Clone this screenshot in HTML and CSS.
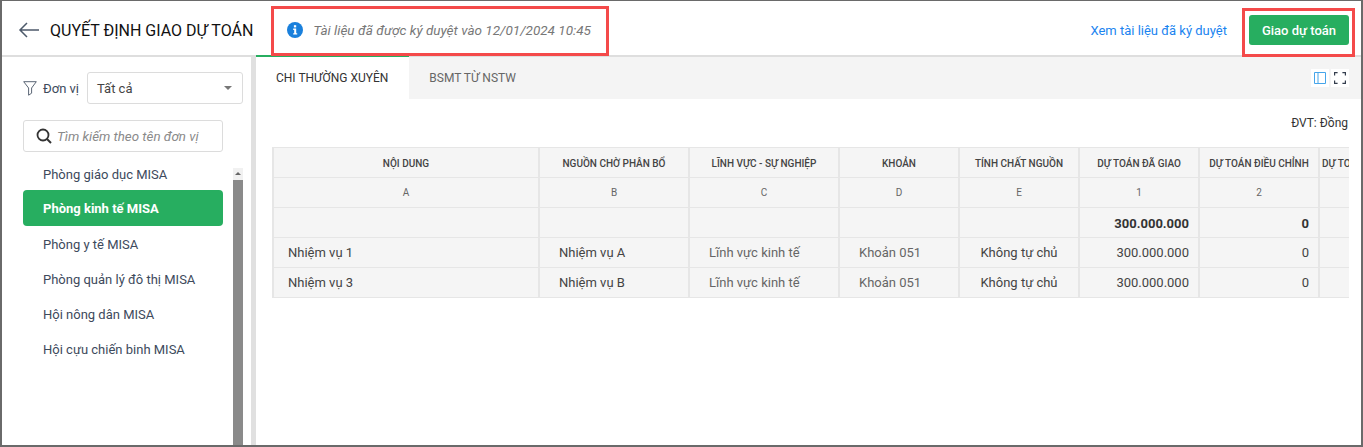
FILE: index.html
```html
<!DOCTYPE html>
<html lang="en">

<head>
    <meta charset="UTF-8">
    <title>Quyết định giao dự toán</title>
    <link rel="stylesheet" href="styles.css">
</head>

<body>
    <div class="app">
        <header class="top-bar">
            <svg class="back-icon" width="22" height="16" viewBox="0 0 22 16">
                <path d="M21 8H2M9 1L2 8l7 7" fill="none" stroke="#4d5a6b" stroke-width="1.5"/>
            </svg>
            <h1 class="page-title">QUYẾT ĐỊNH GIAO DỰ TOÁN</h1>
            <div class="notice">
                <svg width="16" height="16" viewBox="0 0 16 16">
                    <circle cx="8" cy="8" r="8" fill="#1a80dc"/>
                    <rect x="6.9" y="3.2" width="2.3" height="2.2" fill="#fff"/>
                    <path d="M6.2 6.6h3v4.6h1v1.3H6.2v-1.3h1V7.9h-1z" fill="#fff"/>
                </svg>
                <span>Tài liệu đã được ký duyệt vào 12/01/2024 10:45</span>
            </div>
            <a class="view-link" href="#">Xem tài liệu đã ký duyệt</a>
            <button class="assign-button">Giao dự toán</button>
        </header>

        <div class="content">
            <aside class="sidebar">
                <div class="filter-row">
                    <svg width="14" height="15" viewBox="0 0 14 15">
                        <path d="M.7.7h12.6L8.6 7v5.2L5.6 14.2V7z" fill="none" stroke="#5b6675" stroke-width="1"/>
                    </svg>
                    <label>Đơn vị</label>
                    <div class="select-box">
                        <span>Tất cả</span>
                        <i class="caret"></i>
                    </div>
                </div>
                <div class="search-box">
                    <svg width="16" height="16" viewBox="0 0 16 16">
                        <circle cx="7" cy="7" r="5.5" fill="none" stroke="#333" stroke-width="1.8"/>
                        <path d="M11 11l4 4" stroke="#333" stroke-width="2"/>
                    </svg>
                    <span>Tìm kiếm theo tên đơn vị</span>
                </div>
                <div class="unit-area">
                    <ul class="unit-list">
                        <li>Phòng giáo dục MISA</li>
                        <li class="active">Phòng kinh tế MISA</li>
                        <li>Phòng y tế MISA</li>
                        <li>Phòng quản lý đô thị MISA</li>
                        <li>Hội nông dân MISA</li>
                        <li>Hội cựu chiến binh MISA</li>
                    </ul>
                    <div class="scrollbar">
                        <div class="scroll-up"><i></i></div>
                        <div class="scroll-thumb"></div>
                    </div>
                </div>
            </aside>

            <main class="main">
                <div class="tab-bar">
                    <div class="tab active">CHI THƯỜNG XUYÊN</div>
                    <div class="tab">BSMT TỪ NSTW</div>
                    <div class="tab-tools">
                        <span class="tool">
                            <svg width="12" height="12" viewBox="0 0 12 12">
                                <path d="M.5.5h11v11H.5zM4 .5v11" fill="none" stroke="#45a5ea" stroke-width="1"/>
                            </svg>
                        </span>
                        <span class="tool">
                            <svg width="12" height="12" viewBox="0 0 12 12">
                                <path d="M.6 3.500V.6h3M8.400 .6h3v2.900M11.400 8.500v2.900h-3M3.600 11.400h-3V8.500" fill="none" stroke="#333d4d" stroke-width="1.200"/>
                            </svg>
                        </span>
                    </div>
                </div>
                <div class="unit-note">ĐVT: Đồng</div>
                <div class="table-wrap">
                    <table class="budget-table">
                        <colgroup>
                            <col class="col-wide">
                            <col class="col-mid">
                            <col class="col-mid">
                            <col class="col-std">
                            <col class="col-std">
                            <col class="col-std">
                            <col class="col-std">
                            <col class="col-last">
                        </colgroup>
                        <thead>
                            <tr>
                                <th>NỘI DUNG</th>
                                <th>NGUỒN CHỜ PHÂN BỔ</th>
                                <th>LĨNH VỰC - SỰ NGHIỆP</th>
                                <th>KHOẢN</th>
                                <th>TÍNH CHẤT NGUỒN</th>
                                <th>DỰ TOÁN ĐÃ GIAO</th>
                                <th>DỰ TOÁN ĐIỀU CHỈNH</th>
                                <th class="cut">DỰ TO</th>
                            </tr>
                            <tr class="letters">
                                <td>A</td><td>B</td><td>C</td><td>D</td><td>E</td><td>1</td><td>2</td><td></td>
                            </tr>
                        </thead>
                        <tbody>
                            <tr class="total">
                                <td></td><td></td><td></td><td></td><td></td>
                                <td class="num">300.000.000</td><td class="num">0</td><td></td>
                            </tr>
                            <tr>
                                <td class="name">Nhiệm vụ 1</td><td class="source">Nhiệm vụ A</td>
                                <td class="soft">Lĩnh vực kinh tế</td><td class="soft">Khoản 051</td>
                                <td class="center">Không tự chủ</td>
                                <td class="num">300.000.000</td><td class="num">0</td><td></td>
                            </tr>
                            <tr>
                                <td class="name">Nhiệm vụ 3</td><td class="source">Nhiệm vụ B</td>
                                <td class="soft">Lĩnh vực kinh tế</td><td class="soft">Khoản 051</td>
                                <td class="center">Không tự chủ</td>
                                <td class="num">300.000.000</td><td class="num">0</td><td></td>
                            </tr>
                        </tbody>
                    </table>
                </div>
            </main>
        </div>

        <div class="callout callout-notice"></div>
        <div class="callout callout-button"></div>
    </div>
</body>

</html>
```

FILE: styles.css
```css
* {
    box-sizing: border-box;
}

html,
body {
    margin: 0;
    padding: 0;
    height: 100%;
    overflow: hidden;
}

body {
    font-family: Roboto, Arial, sans-serif;
    color: #222;
    background-color: #fff;
}

.app {
    position: relative;
    width: 1363px;
    height: 447px;
    display: flex;
    flex-direction: column;
    border: 2px solid #6a6a6a;
    border-top-width: 1px;
    overflow: hidden;
}

.top-bar {
    height: 56px;
    flex-shrink: 0;
    display: flex;
    align-items: center;
    padding: 4px 12px 0 16px;
    border-bottom: 2px solid #dedede;
}

.back-icon {
    margin-right: 10px;
}

.page-title {
    margin: 0;
    font-size: 16px;
    font-weight: 400;
    color: #111;
    white-space: nowrap;
}

.notice {
    display: flex;
    align-items: center;
    gap: 10px;
    margin-left: 34px;
    font-size: 13.5px;
    font-style: italic;
    color: #777;
}

.view-link {
    margin-left: auto;
    margin-right: 22px;
    font-size: 13px;
    color: #1a84f0;
    text-decoration: none;
}

.assign-button {
    width: 100px;
    height: 30px;
    border: none;
    border-radius: 3px;
    background-color: #27ae60;
    color: #fff;
    font-family: inherit;
    font-size: 13px;
    font-weight: 500;
}

.content {
    flex: 1;
    display: flex;
    min-height: 0;
}

.sidebar {
    width: 254px;
    flex-shrink: 0;
    display: flex;
    flex-direction: column;
    padding: 15px 0 0 21px;
    border-right: 5px solid #e0e0e0;
    font-size: 13px;
    color: #3d4a5c;
}

.filter-row {
    display: flex;
    align-items: center;
    width: 220px;
    height: 32px;
}

.filter-row label {
    margin-left: 6px;
    margin-right: 8px;
}

.select-box {
    flex: 1;
    height: 32px;
    display: flex;
    align-items: center;
    justify-content: space-between;
    padding: 0 10px 0 9px;
    border: 1px solid #dcdcdc;
    border-radius: 3px;
    color: #444;
}

.caret {
    width: 0;
    height: 0;
    border-left: 4px solid transparent;
    border-right: 4px solid transparent;
    border-top: 4px solid #777;
}

.search-box {
    width: 200px;
    height: 32px;
    margin-top: 16px;
    display: flex;
    align-items: center;
    gap: 5px;
    padding-left: 12px;
    border: 1px solid #dcdcdc;
    border-radius: 3px;
    font-size: 13.3px;
    font-style: italic;
    color: #8a8a8a;
}

.unit-area {
    flex: 1;
    min-height: 0;
    display: flex;
    margin-top: 4px;
}

.unit-list {
    width: 200px;
    margin: 1px 0 0;
    padding: 0;
    list-style: none;
}

.unit-list li {
    height: 35px;
    line-height: 35px;
    padding-left: 20px;
}

.unit-list li.active {
    height: 36px;
    margin-top: -2px;
    margin-bottom: 1px;
    line-height: 38px;
    border-radius: 4px;
    background-color: #27ae60;
    color: #fff;
    font-weight: 700;
}

.scrollbar {
    width: 10px;
    margin-left: 10px;
    margin-top: 12px;
    display: flex;
    flex-direction: column;
    background-color: #f1f1f1;
}

.scroll-up {
    height: 12px;
    display: flex;
    justify-content: center;
    padding-top: 4px;
}

.scroll-up i {
    width: 0;
    height: 0;
    border-left: 3px solid transparent;
    border-right: 3px solid transparent;
    border-bottom: 3px solid #666;
}

.scroll-thumb {
    flex: 1;
    background-color: #8a8a8a;
}

.main {
    flex: 1;
    min-width: 0;
    display: flex;
    flex-direction: column;
}

.tab-bar {
    height: 42px;
    flex-shrink: 0;
    display: flex;
    background-color: #f4f4f4;
    font-size: 12px;
    color: #666;
}

.tab {
    padding: 0 20px;
    line-height: 43px;
}

.tab.active {
    height: 44px;
    margin-top: -2px;
    padding-right: 21px;
    line-height: 43px;
    border-top: 2px solid #27ae60;
    background-color: #fff;
    color: #333;
}

.tab-tools {
    margin-left: auto;
    margin-right: 12px;
    display: flex;
    align-items: center;
    gap: 2px;
}

.tool {
    width: 18px;
    height: 18px;
    display: flex;
    align-items: center;
    justify-content: center;
    background-color: #fff;
}

.unit-note {
    margin-top: 17px;
    margin-right: 13px;
    text-align: right;
    font-size: 12px;
    color: #333;
}

.table-wrap {
    width: 1077px;
    margin-top: 17px;
    margin-left: 16px;
    overflow: hidden;
}

.budget-table {
    width: 1077px;
    table-layout: fixed;
    border-collapse: collapse;
    background-color: #f5f5f5;
}

.col-wide {
    width: 266px;
}

.col-mid {
    width: 150px;
}

.col-std {
    width: 120px;
}

.col-last {
    width: 31px;
}

.budget-table th,
.budget-table td {
    height: 30px;
    padding: 0 8px;
    border: 1px solid #e6e6e6;
    border-left-width: 2px;
    border-right-width: 2px;
    white-space: nowrap;
    overflow: hidden;
    font-size: 13px;
    color: #444;
}

.budget-table th:last-child,
.budget-table td:last-child {
    border-right: none;
}

.budget-table th {
    padding: 2px 0 0;
    font-size: 10px;
    font-weight: 500;
    text-align: center;
    color: #444;
}

.budget-table th.cut {
    padding-left: 2px;
    text-align: left;
}

.budget-table .letters td {
    font-size: 10px;
    text-align: center;
    color: #666;
}

.budget-table td.name {
    padding-left: 14px;
}

.budget-table td.source {
    padding-left: 19px;
}

.budget-table td.soft {
    padding-left: 19px;
    color: #666;
}

.budget-table td.center {
    text-align: center;
}

.budget-table td.num {
    text-align: right;
    padding-right: 9px;
}

.budget-table .total td {
    padding-top: 2px;
    font-weight: 700;
    color: #333;
}

.callout {
    position: absolute;
    border: 3px solid #f44a4a;
}

.callout-notice {
    left: 269px;
    top: 5px;
    width: 338px;
    height: 50px;
}

.callout-button {
    left: 1240px;
    top: 7px;
    width: 113px;
    height: 49px;
}
```
